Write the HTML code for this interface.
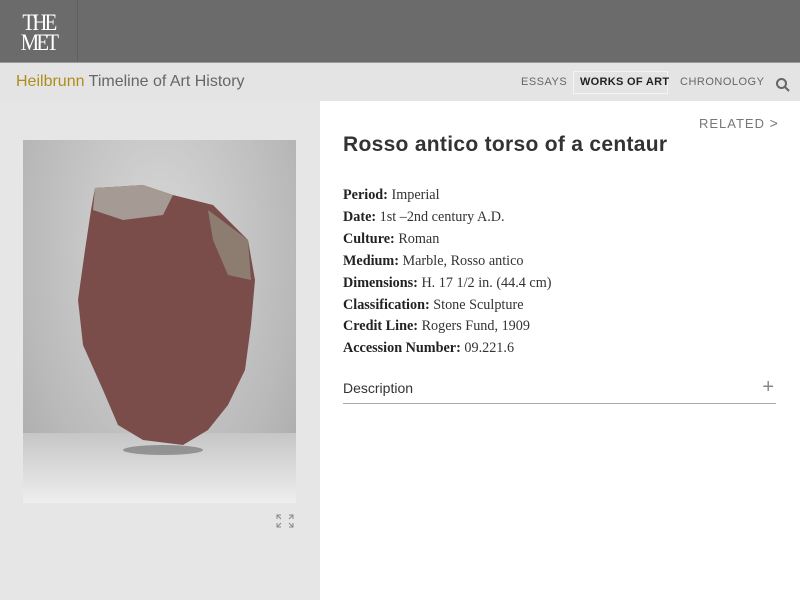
<!DOCTYPE html>
<html><head><style>
body{margin:0;width:800px;height:600px;overflow:hidden;font-family:"Liberation Sans",sans-serif;background:#fff;position:relative}
.top{position:absolute;left:0;top:0;width:800px;height:62px;background:#6b6b6b}
.logo{position:absolute;left:0;top:0;width:78px;height:62px;border-right:1px solid #5f5f5f;box-sizing:border-box}
.logo span{display:block;color:#fff;font-family:"Liberation Serif",serif;font-size:23px;line-height:20px;text-align:center;padding-top:13px;letter-spacing:-3px;transform:scaleX(.9)}
.sub{position:absolute;left:0;top:62px;width:800px;height:38px;background:#e4e4e4;border-top:1px solid #999}
.t{position:absolute;left:16px;top:10px;font-size:16px;color:#666}
.t b{font-weight:normal;color:#b08d1a}
.nav{position:absolute;top:13px;font-size:11px;letter-spacing:.5px;color:#666}
.left{position:absolute;left:0;top:100px;width:320px;height:500px;background:#e6e6e6}
.img{position:absolute;left:23px;top:140px;width:273px;height:363px;background:radial-gradient(ellipse at 50% 30%,#d8d8d8,#b9b9b9 70%,#a8a8a8);overflow:hidden}
.img .fl{position:absolute;left:0;bottom:0;width:273px;height:70px;background:linear-gradient(#c6c6c6,#eee)}
h1{position:absolute;left:343px;top:133px;margin:0;font-size:21px;color:#333;font-weight:bold;letter-spacing:.3px}
.meta{position:absolute;left:343px;top:185px;font-family:"Liberation Serif",serif;font-size:14.2px;color:#333;line-height:21.9px}
.meta b{color:#222}
.rel{position:absolute;left:699px;top:115px;font-size:13px;letter-spacing:1px;color:#777}
.desc{position:absolute;left:343px;top:380px;width:433px;height:23px;border-bottom:1px solid #aaa;font-size:14px;color:#333}
</style></head><body>
<div class="top"><div class="logo"><span>THE<br>MET</span></div></div>
<div class="sub"><div class="t"><b>Heilbrunn</b> Timeline of Art History</div>
<div class="nav" style="left:521px">ESSAYS</div>
<div style="position:absolute;left:573px;top:8px;width:95px;height:23px;border:1px solid #f4f4f4;box-sizing:border-box"></div>
<div class="nav" style="left:580px;color:#222;font-weight:bold;letter-spacing:.3px">WORKS OF ART</div>
<div class="nav" style="left:680px">CHRONOLOGY</div>
<svg style="position:absolute;left:775px;top:14px" width="16" height="16"><circle cx="6.5" cy="6.5" r="4.5" fill="none" stroke="#666" stroke-width="2"/><line x1="10" y1="10" x2="14" y2="14" stroke="#666" stroke-width="2"/></svg></div>
<div class="left"></div>
<div class="img"><div class="fl"></div>
<svg width="273" height="363" style="position:absolute;left:0;top:0"><path d="M72 48 L120 45 L150 55 L190 65 L225 100 L232 140 L228 185 L222 230 L205 265 L185 290 L160 305 L120 300 L95 285 L80 250 L60 205 L55 160 L62 110 L68 70 Z" fill="#7a4d4a"/><path d="M72 48 L120 45 L150 55 L140 75 L100 80 L70 70 Z" fill="#a59b94"/><path d="M185 70 L225 100 L228 140 L205 135 L190 100Z" fill="#8d7d70"/><ellipse cx="140" cy="310" rx="40" ry="5" fill="#555" opacity=".5"/></svg></div>
<svg style="position:absolute;left:276px;top:514px" width="18" height="14" fill="none" stroke="#888" stroke-width="1"><path d="M1 5V1h4M1 1l4 4M17 5V1h-4M17 1l-4 4M1 9v4h4M1 13l4-4M17 9v4h-4M17 13l-4-4"/></svg>
<div class="rel">RELATED <span style="font-size:14px">&gt;</span></div>
<h1>Rosso antico torso of a centaur</h1>
<div class="meta"><b>Period:</b> Imperial<br><b>Date:</b> 1st –2nd century A.D.<br><b>Culture:</b> Roman<br><b>Medium:</b> Marble, Rosso antico<br><b>Dimensions:</b> H. 17 1/2 in. (44.4 cm)<br><b>Classification:</b> Stone Sculpture<br><b>Credit Line:</b> Rogers Fund, 1909<br><b>Accession Number:</b> 09.221.6</div>
<div class="desc">Description<span style="position:absolute;right:2px;top:-4px;font-size:20px;color:#888;font-weight:300">+</span></div>
</body></html>
